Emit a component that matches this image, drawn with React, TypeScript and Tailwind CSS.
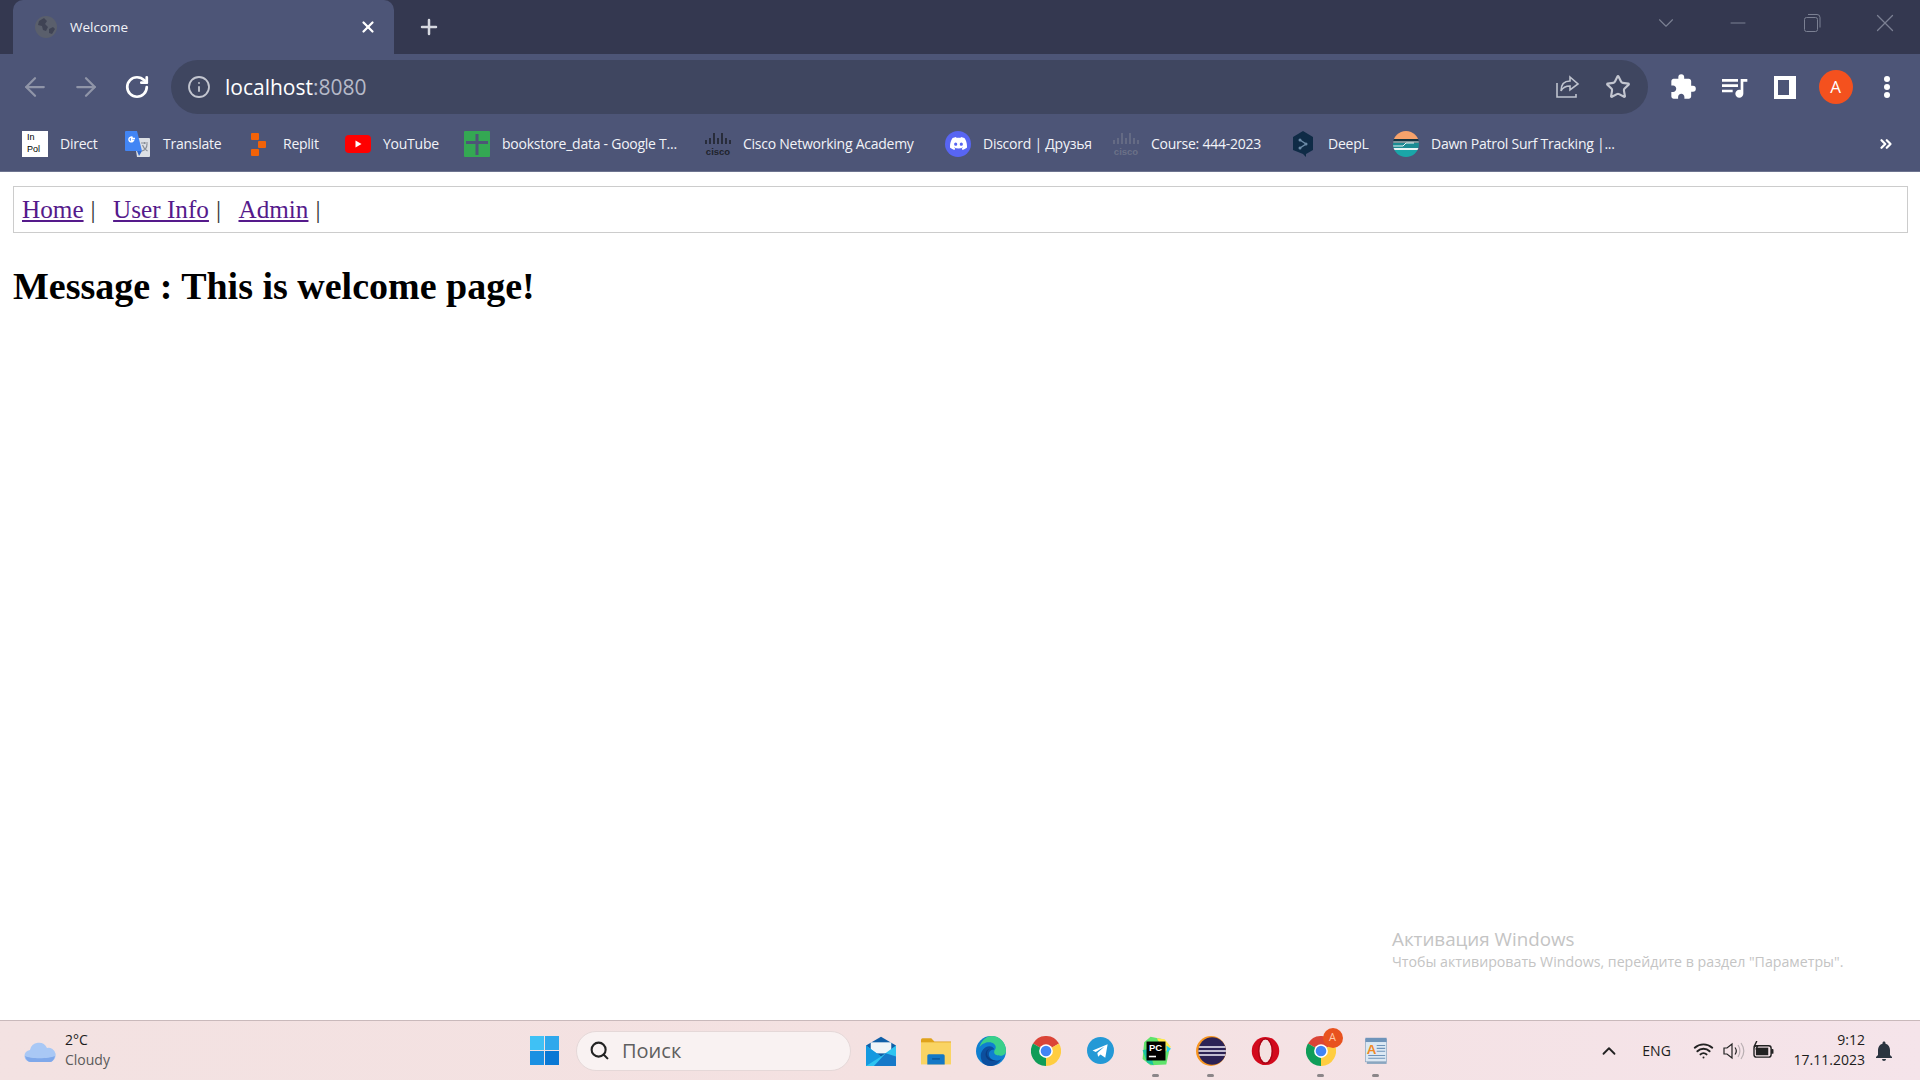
import { ArrowLeft, ArrowRight, ChevronDown, ChevronUp, ChevronsRight, Info, Minus, Plus, RotateCw, Search, Star, Wifi, X } from "lucide-react";
import { MdExtension, MdQueueMusic, MdNotifications } from "react-icons/md";
import { SiDiscord } from "react-icons/si";

const ui = "font-['Open_Sans','Noto_Sans',sans-serif]";

function GlobeIcon() {
  return (
    <svg viewBox="0 0 24 24" className="w-[24px] h-[24px]">
      <circle cx="12" cy="12" r="11" fill="#5a5f6c" />
      <path d="M5 6l5-3 3 3-2 3 3 3-2 4-3-1-1-4-4-1zM15 14l4-2 2 2-3 5-3-1z" fill="#3f4354" />
    </svg>
  );
}

function InPolIcon() {
  return (
    <div className="w-[26px] h-[26px] bg-white text-black text-[9px] leading-[12px] pl-[5px] flex flex-col font-['Liberation_Sans',sans-serif]">
      <span>In</span>
      <span>Pol</span>
    </div>
  );
}

function TranslateIcon() {
  return (
    <svg viewBox="0 0 26 26" className="w-[26px] h-[26px]">
      <path d="M9 7h15a1 1 0 0 1 1 1v17a1 1 0 0 1-1 1H12z" fill="#dcdfe4" />
      <path d="M1 0h11l5 20H1a1 1 0 0 1-1-1V1a1 1 0 0 1 1-1z" fill="#4285f4" />
      <path d="M12 20h5l-3 5z" fill="#3367c8" />
      <path d="M10 7.5H6.5v2h2a2.4 2.4 0 1 1-.8-3" fill="none" stroke="#fff" strokeWidth="1.4" />
      <path d="M16 12h7M19.5 11v2M17 20c3-1 5-4 5-7M17.5 14c1 3 3 5 5 6" fill="none" stroke="#8a8f98" strokeWidth="1.2" />
    </svg>
  );
}

function ReplitIcon() {
  return (
    <svg viewBox="0 0 26 26" className="w-[26px] h-[26px]">
      <rect x="6" y="2" width="8" height="7" rx="1" fill="#f26207" />
      <rect x="13" y="10" width="8" height="7" rx="1" fill="#f26207" />
      <rect x="6" y="18" width="8" height="7" rx="1" fill="#f26207" />
    </svg>
  );
}

function YoutubeIcon() {
  return (
    <svg viewBox="0 0 26 26" className="w-[26px] h-[26px]">
      <rect x="0" y="4" width="26" height="18" rx="4" fill="#ff0000" />
      <path d="M10.5 9.5l6 3.5-6 3.5z" fill="#fff" />
    </svg>
  );
}

function SheetIcon() {
  return (
    <svg viewBox="0 0 26 26" className="w-[26px] h-[26px]">
      <rect width="26" height="26" rx="1" fill="#34a853" />
      <path d="M11.500 3h3v7H24v3h-9.500v11h-3V13H2v-3h9.500z" fill="#4d5577" />
    </svg>
  );
}

function CiscoIcon({ color }: { color: string }) {
  return (
    <svg viewBox="0 0 26 26" className="w-[26px] h-[26px]">
      <path
        d="M1 9v4M5 7v6M9 2v11M13 7v6M17 2v11M21 7v6M25 9v4"
        stroke={color}
        strokeWidth="1.600"
        fill="none"
      />
      <text x="13" y="24" textAnchor="middle" fontSize="9.500" fontWeight="700" fill={color} fontFamily="'Liberation Sans',sans-serif">
        cisco
      </text>
    </svg>
  );
}

function DiscordIcon() {
  return (
    <div className="w-[26px] h-[26px] rounded-full bg-[#5865f2] flex items-center justify-center">
      <SiDiscord size={17} color="#fff" />
    </div>
  );
}

function DeeplIcon() {
  return (
    <svg viewBox="0 0 26 26" className="w-[26px] h-[26px]">
      <path d="M13 0l10 6v13l-7 4v3l-3-3-10-4V6z" fill="#0f2b46" />
      <path d="M10 9l6 4-6 4" fill="none" stroke="#6b8aa6" strokeWidth="1.500" />
      <circle cx="16" cy="13" r="1.500" fill="#6b8aa6" />
      <circle cx="10" cy="9" r="1.500" fill="#6b8aa6" />
      <circle cx="10" cy="17" r="1.500" fill="#6b8aa6" />
    </svg>
  );
}

function SurfIcon() {
  return (
    <svg viewBox="0 0 26 26" className="w-[26px] h-[26px]">
      <clipPath id="surf">
        <circle cx="13" cy="13" r="13" />
      </clipPath>
      <g clipPath="url(#surf)">
        <rect width="26" height="8" fill="#f7a26b" />
        <rect y="8" width="26" height="4" fill="#12323f" />
        <rect y="12" width="26" height="5" fill="#1c8b93" />
        <rect y="17" width="26" height="2" fill="#e8f4f4" />
        <rect y="19" width="26" height="7" fill="#1aa6a8" />
        <path d="M0 11h26M0 15h10l3-3h8" stroke="#e8f4f4" strokeWidth="1" fill="none" />
      </g>
    </svg>
  );
}

const bookmarks = [
  { label: "Direct", icon: <InPolIcon />, width: "w-[103px]" },
  { label: "Translate", icon: <TranslateIcon />, width: "w-[120px]" },
  { label: "Replit", icon: <ReplitIcon />, width: "w-[100px]" },
  { label: "YouTube", icon: <YoutubeIcon />, width: "w-[119px]" },
  { label: "bookstore_data - Google T...", icon: <SheetIcon />, width: "w-[241px]" },
  { label: "Cisco Networking Academy", icon: <CiscoIcon color="#20232c" />, width: "w-[240px]" },
  { label: "Discord | Друзья", icon: <DiscordIcon />, width: "w-[168px]" },
  { label: "Course: 444-2023", icon: <CiscoIcon color="#6b7188" />, width: "w-[177px]" },
  { label: "DeepL", icon: <DeeplIcon />, width: "w-[103px]" },
  { label: "Dawn Patrol Surf Tracking |...", icon: <SurfIcon />, width: "w-[270px]" },
];

function Bookmark({ label, icon, width }: { label: string; icon: React.ReactNode; width: string }) {
  return (
    <div className={"flex items-center gap-[12px] shrink-0 " + width}>
      <span className="w-[26px] h-[26px] flex items-center justify-center shrink-0">{icon}</span>
      <span className="text-[14px] tracking-[-0.25px] whitespace-nowrap text-[#f2f3f7]">{label}</span>
    </div>
  );
}

function ShareIcon() {
  return (
    <svg viewBox="0 0 26 26" className="w-[26px] h-[26px]" fill="none" stroke="#bfc3ce" strokeWidth="1.600">
      <path d="M3 9v14h19v-3" />
      <path d="M16 3l8 7-8 6v-4c-4 0-7 1-9 5 0-6 3-10 9-10z" />
    </svg>
  );
}

function PanelIcon() {
  return (
    <div className="w-[22px] h-[23px] bg-white flex items-center pl-[4px]">
      <div className="w-[11px] h-[15px] bg-[#4d5577]" />
    </div>
  );
}

function ChromeIcon() {
  return (
    <svg viewBox="0 0 48 48" className="w-[30px] h-[30px]">
      <path d="M24 24L44.800 12A24 24 0 0 0 3.200 12z" fill="#db4437" />
      <path d="M24 24L3.200 12A24 24 0 0 0 24 48z" fill="#0f9d58" />
      <path d="M24 24L24 48A24 24 0 0 0 44.800 12z" fill="#ffcd40" />
      <circle cx="24" cy="24" r="11" fill="#fff" />
      <circle cx="24" cy="24" r="8.500" fill="#4285f4" />
    </svg>
  );
}

function MailIcon() {
  return (
    <svg viewBox="0 0 38 38" className="w-[30px] h-[30px]">
      <path d="M0 12L19 1l19 11v26H0z" fill="#0f5fa8" />
      <path d="M6 8h26v14H6z" fill="#eef4f8" />
      <path d="M0 12l19 14 19-14v26H0z" fill="#2ec4f1" />
      <path d="M0 38V12l19 14z" fill="#1499e0" />
      <path d="M38 38V26L25 22 10 38z" fill="#1679c9" />
    </svg>
  );
}

function FolderIcon() {
  return (
    <svg viewBox="0 0 38 38" className="w-[30px] h-[30px]">
      <path d="M0 5a2 2 0 0 1 2-2h11l4 4h21v6H0z" fill="#e0a21b" />
      <path d="M0 8h38v28H0z" fill="#fad463" />
      <path d="M8 25a2 2 0 0 1 2-2h18a2 2 0 0 1 2 2v11H8z" fill="#1478c6" />
      <rect x="14" y="28" width="10" height="2" fill="#0d5a9e" />
    </svg>
  );
}

function EdgeIcon() {
  return (
    <svg viewBox="0 0 38 38" className="w-[30px] h-[30px]">
      <circle cx="19" cy="19" r="19" fill="#0f7fd0" />
      <path d="M4 16C6 6 13 0 20 0c10 0 18 8 18 19 0 3-2 6-7 6-5 0-8-2-8-4 0-4 2-3 2-7S20 7 15 8C9 9 5 12 4 16z" fill="#39d08a" />
      <path d="M32 29c-3 5-8 9-14 9-9 0-12-7-12-13 0-6 5-12 11-12 3 0 6 2 6 4-5 0-8 4-6 9s10 7 15 3z" fill="#0c4f9e" />
      <path d="M17 16c-3 2-4 6-2 10 2 3 6 5 10 5-5 2-10 0-12-4-2-5 0-10 4-11z" fill="#0a3d82" />
    </svg>
  );
}

function TelegramIcon() {
  return (
    <svg viewBox="0 0 34 34" className="w-[27px] h-[27px]">
      <circle cx="17" cy="17" r="17" fill="#2499d6" />
      <path d="M7 17l19-8-3 17-6-4-3 3-1-5 9-8-11 7z" fill="#fff" />
    </svg>
  );
}

function PycharmIcon() {
  return (
    <svg viewBox="0 0 38 38" className="w-[30px] h-[30px]">
      <path d="M4 8L12 1l16 3 8 13-4 19-20 1-10-8z" fill="#5fe36b" />
      <path d="M20 3l10 1 8 10-8 6z" fill="#ffe94d" />
      <path d="M2 18l6 16 8 3-6-21z" fill="#19c2a2" />
      <path d="M32 12l6 4-5 5z" fill="#21d0f2" />
      <rect x="7" y="7" width="24" height="24" fill="#000" />
      <text x="10" y="19" fill="#fff" fontSize="12" fontWeight="700" fontFamily="'Liberation Sans',sans-serif">PC</text>
      <rect x="10" y="25" width="9" height="2" fill="#fff" />
    </svg>
  );
}

function EclipseIcon() {
  return (
    <svg viewBox="0 0 38 38" className="w-[30px] h-[30px]">
      <clipPath id="eclipse-disc">
        <circle cx="20.500" cy="19" r="17.500" />
      </clipPath>
      <circle cx="19" cy="19" r="19" fill="#f7941e" />
      <circle cx="20.500" cy="19" r="17.500" fill="#2c2255" />
      <path d="M2 14h37M2 19h37M2 24h37" stroke="#f3f1fa" strokeWidth="2" clipPath="url(#eclipse-disc)" />
    </svg>
  );
}

function OperaIcon() {
  return (
    <svg viewBox="0 0 38 38" className="w-[29px] h-[30px]">
      <ellipse cx="19" cy="19" rx="18" ry="18.500" fill="#d2091c" />
      <ellipse cx="19" cy="19" rx="8" ry="15" fill="#f4e1e1" />
      <ellipse cx="19" cy="19" rx="9" ry="16" fill="none" stroke="#a50616" strokeWidth="1.500" />
    </svg>
  );
}

function NotepadIcon() {
  return (
    <svg viewBox="0 0 34 40" className="w-[24px] h-[29px]">
      <rect x="2" y="4" width="30" height="32" fill="#dce8f3" stroke="#8aa6c0" />
      <rect x="2" y="2" width="30" height="6" fill="#6f94ba" />
      <path d="M18 13h12M18 17h12M18 21h12M6 27h24M6 31h24" stroke="#6f94ba" strokeWidth="1.500" />
      <text x="4" y="25" fill="#f08a24" fontSize="19" fontWeight="700" fontFamily="'Liberation Sans',sans-serif">A</text>
      <rect x="4" y="36" width="28" height="3" fill="#8aa6c0" />
    </svg>
  );
}

function ChromeBadged() {
  return (
    <div className="relative h-[30px]">
      <ChromeIcon />
      <span className="absolute -top-[8px] -right-[7px] w-[20px] h-[20px] rounded-full bg-[#e8521f] text-[#ffc9a8] text-[11px] flex items-center justify-center">
        A
      </span>
    </div>
  );
}

function SpeakerIcon() {
  return (
    <svg viewBox="0 0 24 20" className="w-[24px] h-[20px]" fill="none" strokeWidth="1.200">
      <path d="M2 7h3l5-4v14l-5-4H2z" stroke="#222" />
      <path d="M13 6.500c1.500 2 1.500 5 0 7" stroke="#222" />
      <path d="M16 4c2.500 3.500 2.500 8.500 0 12M19 2c3.500 5 3.500 11 0 16" stroke="#b9aeb2" />
    </svg>
  );
}

function BatteryIcon() {
  return (
    <svg viewBox="0 0 24 20" className="w-[23px] h-[19px]">
      <rect x="2" y="5" width="18" height="12" rx="2.500" fill="none" stroke="#222" strokeWidth="1.500" />
      <rect x="4" y="7" width="13" height="8" fill="#222" />
      <rect x="20" y="8.500" width="2.500" height="5" rx="1" fill="#222" />
      <path d="M5 0L2.500 5H6L4 9" fill="none" stroke="#222" strokeWidth="1.500" />
    </svg>
  );
}

const taskbarApps = [
  { key: "mail", icon: <MailIcon />, open: false },
  { key: "files", icon: <FolderIcon />, open: false },
  { key: "edge", icon: <EdgeIcon />, open: false },
  { key: "chrome", icon: <ChromeIcon />, open: false },
  { key: "telegram", icon: <TelegramIcon />, open: false },
  { key: "pycharm", icon: <PycharmIcon />, open: true },
  { key: "eclipse", icon: <EclipseIcon />, open: true },
  { key: "opera", icon: <OperaIcon />, open: false },
  { key: "chrome2", icon: <ChromeBadged />, open: true },
  { key: "notepad", icon: <NotepadIcon />, open: true },
];

function TabStrip() {
  return (
    <div className="h-[54px] bg-[#343850] flex pl-[13px] shrink-0">
      <div className="w-[381px] h-[54px] bg-[#4d5577] rounded-t-[10px] flex items-center pl-[21px] pr-[17px]">
        <GlobeIcon />
        <span className="ml-[12px] text-[13.5px] text-[#f2f3f7] flex-1">Welcome</span>
        <X size={18} strokeWidth={3} color="#fff" />
      </div>
      <div className="ml-[23px] flex items-center">
        <Plus size={24} strokeWidth={2.5} color="#d6d8e0" />
      </div>
      <div className="ml-auto flex items-center h-[46px] text-[#7b8093]">
        <ChevronDown size={26} strokeWidth={1} />
        <Minus size={24} strokeWidth={1} className="ml-[47px]" />
        <svg viewBox="0 0 24 24" className="w-[24px] h-[24px] ml-[50px]" fill="none" stroke="currentColor" strokeWidth="1">
          <rect x="4.500" y="6.500" width="13" height="14" rx="2" />
          <path d="M8 3.500h9a3 3 0 0 1 3 3v10" />
        </svg>
        <X size={30} strokeWidth={1} className="ml-[46px] mr-[20px]" />
      </div>
    </div>
  );
}

function Slot({ children }: { children: React.ReactNode }) {
  return <div className="w-[51px] flex items-center justify-center shrink-0">{children}</div>;
}

function Toolbar() {
  return (
    <div className="h-[60px] bg-[#4d5577] flex items-center pt-[6px] pl-[9px] shrink-0">
      <Slot>
        <ArrowLeft size={30} color="#9095a8" strokeWidth={1.8} />
      </Slot>
      <Slot>
        <ArrowRight size={30} color="#9095a8" strokeWidth={1.8} />
      </Slot>
      <Slot>
        <RotateCw size={26} color="#fff" strokeWidth={2.5} />
      </Slot>
      <div className="ml-[9px] w-[1477px] h-[54px] rounded-full bg-[#3f4660] flex items-center pl-[16px] pr-[17px] shrink-0">
        <Info size={24} color="#c3c6d0" strokeWidth={1.8} />
        <span className="ml-[14px] mt-[2px] text-[21px] text-white">
          localhost<span className="text-[#b6bac8]">:8080</span>
        </span>
        <div className="ml-auto flex items-center gap-[25px]">
          <ShareIcon />
          <Star size={26} color="#c3c6d0" strokeWidth={2} />
        </div>
      </div>
      <div className="ml-[9px] flex items-center">
        <Slot>
          <MdExtension size={28} color="#fff" />
        </Slot>
        <Slot>
          <MdQueueMusic size={32} color="#fff" />
        </Slot>
        <Slot>
          <PanelIcon />
        </Slot>
        <Slot>
          <div className="w-[34px] h-[34px] rounded-full bg-[#f4511e] text-white text-[17px] flex items-center justify-center">A</div>
        </Slot>
        <Slot>
          <div className="flex flex-col gap-[2px]">
            <span className="w-[6px] h-[6px] rounded-full bg-white" />
            <span className="w-[6px] h-[6px] rounded-full bg-white" />
            <span className="w-[6px] h-[6px] rounded-full bg-white" />
          </div>
        </Slot>
      </div>
    </div>
  );
}

function BookmarkBar() {
  return (
    <div className="h-[58px] bg-[#4d5577] flex items-center pt-[2px] pl-[22px] pr-[25px] border-b border-[#6d7490] shrink-0">
      {bookmarks.map((b) => (
        <Bookmark key={b.label} {...b} />
      ))}
      <ChevronsRight size={18} strokeWidth={3} color="#fff" className="ml-auto" />
    </div>
  );
}

function Page() {
  return (
    <div className="flex-1 relative bg-white pt-[14px] px-[13px] font-['Liberation_Serif',serif] text-black">
      <div className="h-[47px] mr-[-1px] border border-[#cccccc] flex items-center pt-[1px] pl-[8px] text-[25.2px] text-[#333]">
        <a className="underline text-[#551a8b]">Home</a>
        <span className="ml-[7px]">|</span>
        <a className="underline text-[#551a8b] ml-[17.5px]">User Info</a>
        <span className="ml-[7px]">|</span>
        <a className="underline text-[#551a8b] ml-[17.5px]">Admin</a>
        <span className="ml-[7px]">|</span>
      </div>
      <h2 className="mt-[31px] text-[38px] leading-[44px] font-bold">Message : This is welcome page!</h2>
      <div className={"absolute left-[1392px] top-[754px] text-[#c4c4c4] " + ui}>
        <div className="text-[18.8px] leading-[26px] whitespace-nowrap">Активация Windows</div>
        <div className="text-[14.2px] leading-[19px] whitespace-nowrap">Чтобы активировать Windows, перейдите в раздел "Параметры".</div>
      </div>
    </div>
  );
}

function Taskbar() {
  return (
    <div className="h-[60px] relative shrink-0 border-t border-[#c9b9bb] bg-gradient-to-r from-[#f3e2e2] via-[#f4e1e1] to-[#f5e4ea] flex items-center text-[#1c1c1c]">
      <div className="w-[530px] pl-[24px] flex items-center shrink-0">
        <svg viewBox="0 0 32 24" className="w-[32px] h-[24px]">
          <path d="M7 23a6 6 0 0 1-1-12 9 9 0 0 1 17-2 7 7 0 0 1 3 14z" fill="#a9c8f5" />
          <path d="M1 17c5 3 24 3 30 0-1 4-3 6-5 6H7c-3 0-5-2-6-6z" fill="#7fa8ea" />
        </svg>
        <div className="ml-[9px] mb-[2px] text-[14px] leading-[20px]">
          <div>2°C</div>
          <div className="text-[#5a5a5a]">Cloudy</div>
        </div>
      </div>
      <div className="w-[29px] h-[29px] grid grid-cols-2 gap-[1.5px] shrink-0">
        <span className="bg-[#3fc1f5]" />
        <span className="bg-[#2fa8ec]" />
        <span className="bg-[#1b90e2]" />
        <span className="bg-[#0a78d4]" />
      </div>
      <div className="ml-[17px] w-[275px] h-[40px] rounded-full bg-[#f9f2f2] border border-[#e5d8d8] flex items-center pl-[12px] shrink-0">
        <Search size={21} strokeWidth={2.4} color="#222" />
        <span className="ml-[12px] text-[20px] text-[#5f5f5f]">Поиск</span>
      </div>
      <div className="ml-[2px] flex items-center shrink-0">
        {taskbarApps.map((a) => (
          <div key={a.key} className="relative w-[55px] h-[59px] flex items-center justify-center">
            {a.icon}
            {a.open ? <span className="absolute bottom-[3px] left-[24px] w-[7px] h-[3px] rounded-full bg-[#8b8588]" /> : null}
          </div>
        ))}
      </div>
      <div className="ml-auto flex items-center pr-[24px] shrink-0">
        <div className="w-[30px] flex justify-center">
          <ChevronUp size={22} strokeWidth={2} color="#222" />
        </div>
        <span className="ml-[9px] w-[48px] text-center text-[14px]">ENG</span>
        <div className="ml-[8px] w-[30px] flex justify-center">
          <Wifi size={21} strokeWidth={2.2} color="#222" />
        </div>
        <div className="w-[30px] flex justify-center">
          <SpeakerIcon />
        </div>
        <div className="w-[30px] flex justify-center">
          <BatteryIcon />
        </div>
        <div className="ml-[15px] mb-[2px] text-right text-[14px] leading-[20px] whitespace-nowrap">
          <div>9:12</div>
          <div>17.11.2023</div>
        </div>
        <MdNotifications size={24} color="#2b3440" className="ml-[7px]" />
      </div>
    </div>
  );
}

export default function App() {
  return (
    <div className={"w-[1920px] h-[1080px] flex flex-col overflow-hidden " + ui}>
      <TabStrip />
      <Toolbar />
      <BookmarkBar />
      <Page />
      <Taskbar />
    </div>
  );
}
